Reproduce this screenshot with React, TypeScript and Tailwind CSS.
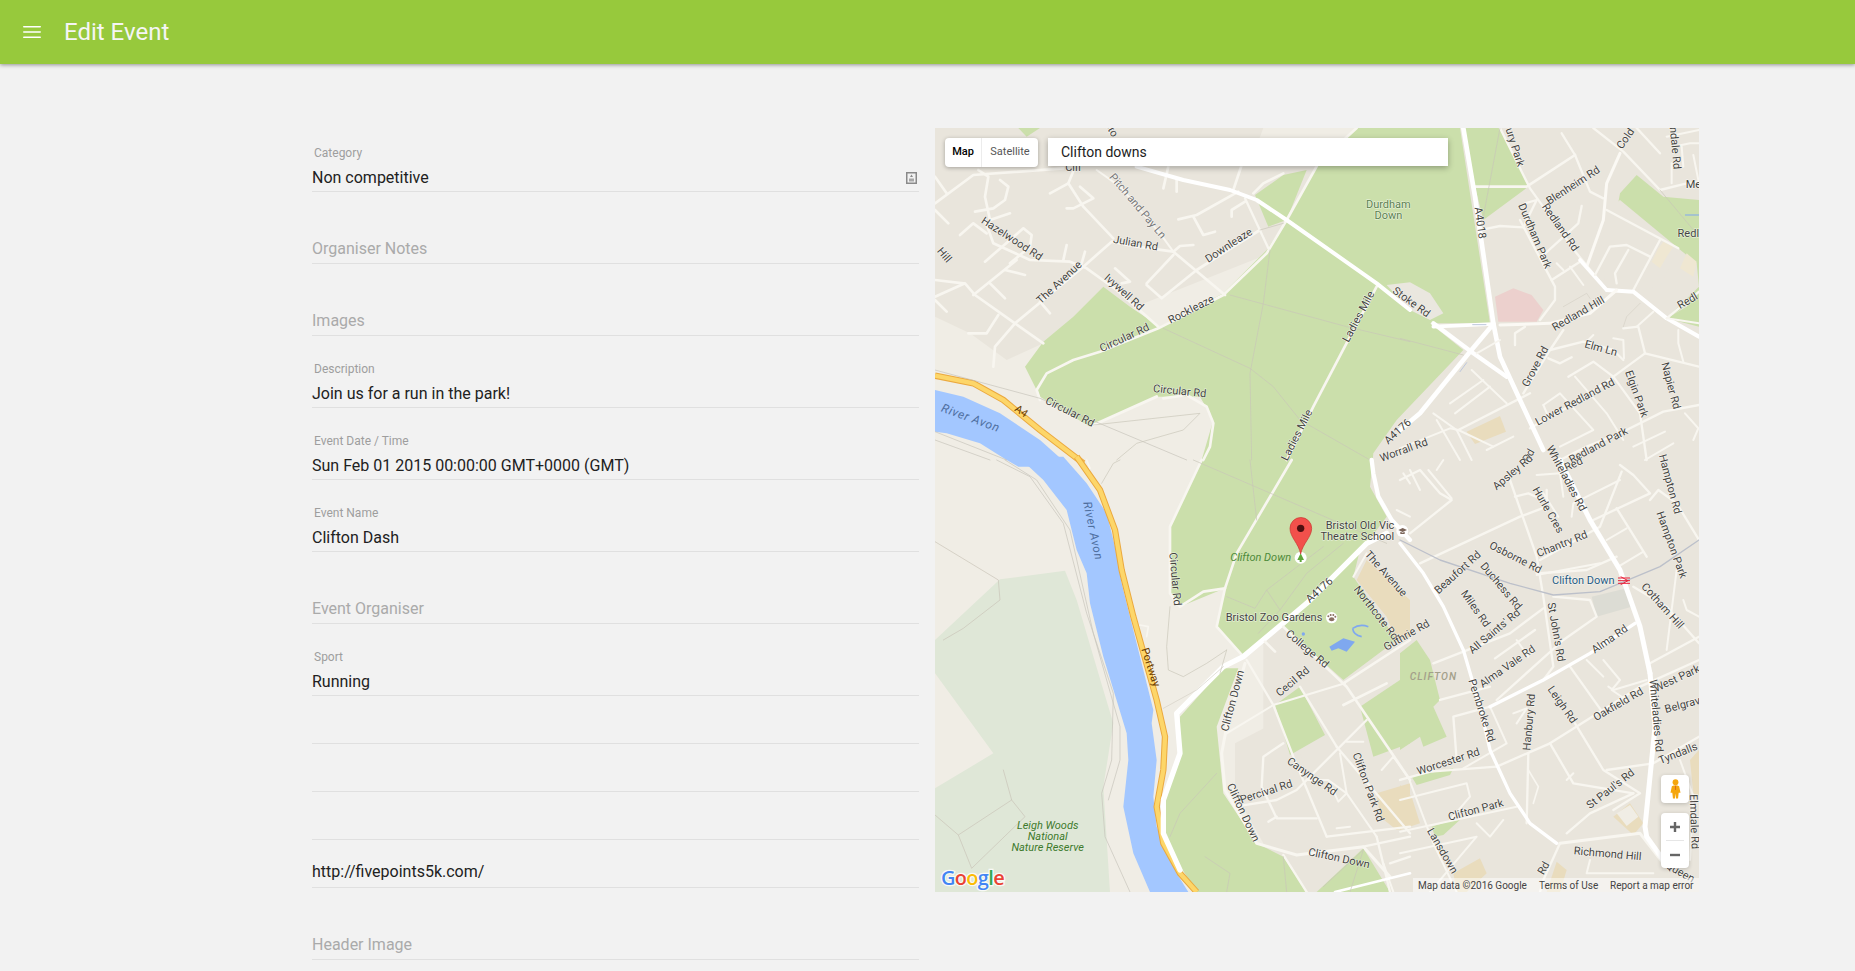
import { Menu } from "lucide-react";

type Field = { label?: string; value?: string; placeholder?: string; short?: boolean; icon?: boolean };

const fields: Field[] = [
  { label: "Category", value: "Non competitive", icon: true },
  { placeholder: "Organiser Notes" },
  { placeholder: "Images" },
  { label: "Description", value: "Join us for a run in the park!" },
  { label: "Event Date / Time", value: "Sun Feb 01 2015 00:00:00 GMT+0000 (GMT)" },
  { label: "Event Name", value: "Clifton Dash" },
  { placeholder: "Event Organiser" },
  { label: "Sport", value: "Running" },
  { short: true },
  { short: true },
  { short: true },
  { value: "http://fivepoints5k.com/", short: true },
  { placeholder: "Header Image" },
];

// every shape below is traced in the coordinates of a 3x crop of the map
const LAND = "#e9e5dc";
const PALE = "#f0ede5";
const PARK = "#cbdfab";
const WOOD = "#dfe7d7";
const WATER = "#a3c7ff";
const ROAD = "#f8f6f0";
const TRAIL = "#c9c5b8";

type Line = [string, number?, string?];
type Label = [number, number, number, string, string?];

const nw: Line[] = [
  ["15,250 130,165 400,145", 8],
  ["145,150 175,170 165,230 180,300", 8],
  ["210,180 235,200 225,240 190,265 135,275", 8],
  ["180,300 240,280", 8],
  ["15,170 50,220", 8],
  ["15,270 55,310", 8],
  ["90,345 130,310 170,340", 8],
  ["165,300 190,370 300,420 420,425 470,445 560,510 685,620", 8],
  ["165,425 280,325 305,345 300,380 240,430", 8],
  ["15,480 100,490", 8],
  ["15,530 105,490 135,525 255,610 340,670", 8],
  ["130,525 260,420", 8],
  ["180,490 225,535", 8],
  ["225,450 285,465", 8],
  ["15,540 50,575", 8],
  ["190,740 195,680 255,610 460,440 545,365 620,380 730,395 885,525", 8],
  ["115,640 170,640 205,585", 8],
  ["415,190 460,260 550,355", 8],
  ["360,220 415,190 440,130", 8],
  ["450,200 490,235 430,265 410,265", 8],
  ["410,375 400,420", 8],
  ["465,395 455,430", 8],
  ["555,445 600,485 575,490", 8],
  ["330,545 360,580", 8],
  ["650,490 730,405", 8],
  ["650,495 695,535 800,450 990,330", 8],
  ["730,395 750,378 790,375", 8],
  ["745,298 800,285 925,215", 8],
  ["790,290 820,345 855,335", 8],
  ["905,290 905,270 945,245", 8],
  ["945,235 1015,385", 7],
  ["910,210 940,120", 8],
  ["700,205 715,140", 8],
  ["740,215 740,180", 8],
  ["500,150 570,200 690,340 730,395", 6],
  ["970,220 1000,190 1060,160", 8],
  ["330,840 320,810 350,760 430,720 510,695 685,625 880,525 1010,400 1070,300 1165,130 1280,24", 8],
  ["490,915 680,830", 9],
  ["700,835 770,825 830,860 850,910 840,980 820,1020", 8],
  ["1340,500 1260,650 1150,860 1070,1020", 8],
  ["620,140 760,180 900,210 980,240 1070,300 1340,490 1440,570", 12, "#ffffff"],
  ["900,525 1250,620 1440,665", 2, TRAIL],
  ["1020,390 1000,550 960,760 965,1020", 2, TRAIL],
  ["700,625 960,745 1030,800 1110,900 1320,1020", 2, TRAIL],
  ["1060,310 990,330", 2, TRAIL],
  ["15,750 330,835 770,1020", 2, "#c6c3ba"],
  ["15,935 230,1020", 2, "#c6c3ba"],
  ["15,960 180,1020", 2, "#c6c3ba"],
  ["490,915 810,880 760,930 620,970 560,1020", 2, TRAIL],
];

const nwLabels: Label[] = [
  [615, 265, 50, "Pitch and Pay Ln", "#777"],
  [240, 365, 33, "Hazelwood Rd"],
  [615, 380, 10, "Julian Rd"],
  [902, 385, -33, "Downleaze"],
  [395, 495, -43, "The Avenue"],
  [575, 525, 42, "Ivywell Rd"],
  [788, 578, -27, "Rockleaze"],
  [588, 663, -25, "Circular Rd"],
  [415, 885, 27, "Circular Rd"],
  [748, 824, 6, "Circular Rd"],
  [1295, 595, -62, "Ladies Mile"],
  [1110, 950, -63, "Ladies Mile"],
  [1375, 265, 0, "Durdham", "#5b7f4e"],
  [1375, 298, 0, "Down", "#5b7f4e"],
  [35, 412, 50, "Hill"],
  [1438, 555, 36, "Stoke Rd"],
  [430, 153, 0, "Clif"],
  [535, 32, 62, "Sto"],
  [1410, 942, -42, "A4176"],
];

const ne: Line[] = [
  ["225,200 380,200 525,105", 8],
  ["300,24 390,205 530,400 620,510", 7],
  ["485,40 525,105 570,215 610,235", 7],
  ["580,24 670,95 780,210 860,190 897,185", 7],
  ["710,24 780,100", 7],
  ["800,50 897,30", 6],
  ["820,80 870,70 897,70", 6],
  ["845,80 850,140", 6],
  ["815,130 815,190", 6],
  ["880,105 895,180", 6],
  ["660,100 620,190 610,300 560,440", 9, "#fbf9f4"],
  ["620,270 835,385", 7],
  ["250,328 300,318 370,322 410,240 375,250", 7],
  ["425,410 535,310 545,258", 7],
  ["360,300 465,500 465,540 420,600", 7],
  ["455,480 540,425", 7],
  ["470,430 490,450", 6],
  ["510,440 550,495", 6],
  ["540,420 620,510", 11, "#ffffff"],
  ["585,465 630,380 680,375 750,410", 7],
  ["650,490 645,460 685,390", 7],
  ["700,510 780,360", 7],
  ["620,510 700,515 800,595 897,650", 12, "#ffffff"],
  ["800,595 897,515", 7],
  ["800,595 897,610", 6],
  ["300,615 450,610 570,580 650,510", 9, "#fbf9f4"],
  ["345,675 345,640 375,620", 7],
  ["490,630 450,690 370,820", 7],
  ["450,690 550,665 640,690 670,720", 7],
  ["445,715 480,730 515,712", 7],
  ["670,625 715,620 735,700 897,740", 7],
  ["710,620 760,575", 6],
  ["835,630 835,670 850,725", 6],
  ["640,655 670,660 672,715", 6],
  ["580,645 560,665", 6],
  ["735,700 640,770 550,835 390,925", 7],
  ["505,770 580,725 640,770 720,880 740,1020", 7],
  ["525,770 620,880 670,960", 6],
  ["430,855 480,820 580,930 480,980", 6],
  ["445,890 430,855", 6],
  ["175,930 390,820", 7],
  ["897,855 790,875 660,940 560,980 480,1020", 7],
  ["700,980 795,935", 6],
  ["735,1020 820,970", 6],
  ["855,880 895,925 880,960", 6],
  ["190,24 225,230 280,610 300,710 360,840 430,990", 14, "#ffffff"],
  ["100,610 220,700 320,770", 13, "#ffffff"],
  ["100,620 280,612", 11, "#ffffff"],
  ["280,612 210,695 60,880 0,930", 14, "#ffffff"],
  ["230,700 300,660", 6],
  ["215,750 320,850", 6],
  ["150,850 250,780", 6],
  ["165,880 270,800", 6],
  ["100,880 170,930 215,1020", 6],
  ["110,900 180,1020", 6],
  ["0,985 150,925 175,930 280,980", 6],
  ["260,990 340,950", 6],
  ["300,24 250,290", 2, TRAIL],
  ["0,655 190,705", 2, TRAIL],
  ["780,210 897,350", 2, TRAIL],
  ["670,620 680,590 720,550", 2, "#d4d0c5"],
  ["490,560 560,520 570,535", 2, "#d4d0c5"],
  ["218,614 258,614", 3, "#bcc6dc"],
  ["180,755 200,728", 3, "#bcc6dc"],
];

const neLabels: Label[] = [
  [230, 310, 82, "A4018"],
  [335, 85, 72, "ury Park"],
  [685, 62, -55, "Cold"],
  [815, 85, 85, "ndale Rd"],
  [525, 205, -33, "Blenheim Rd"],
  [472, 328, 55, "Redland Rd"],
  [395, 352, 67, "Durdham Park"],
  [880, 205, 0, "Me"],
  [865, 350, 0, "Redl"],
  [540, 590, -30, "Redland Hill"],
  [868, 552, -30, "Redl"],
  [600, 695, 15, "Elm Ln"],
  [415, 745, -62, "Grove Rd"],
  [700, 825, 70, "Elgin Park"],
  [802, 800, 75, "Napier Rd"],
  [530, 855, -28, "Lower Redland Rd"],
  [15, 1000, -20, "Worrall Rd"],
  [600, 985, -28, "Redland Park"],
  [395, 1012, -60, "Rd"],
];

const sw: Line[] = [
  ["1085,0 920,280 885,385", 8],
  ["815,0 720,200 720,400 750,440 820,395 885,385 860,500 940,590", 8],
  ["1370,220 1310,250 1130,430 940,590 880,620 740,760 750,880 700,1020 700,1120 750,1230", 16, "#ffffff"],
  ["945,610 890,800 875,880 885,990 980,1150 1100,1185 1300,1160 1380,1250", 9],
  ["1060,500 1250,680 1440,960", 8],
  ["1005,545 1035,575", 8],
  ["1440,540 1240,670", 8],
  ["890,820 1030,735 1245,670", 6],
  ["950,600 1030,735 1090,890 1190,1130", 7],
  ["1110,680 1220,860", 7],
  ["1240,735 1370,670", 8],
  ["1220,860 1440,1120", 7],
  ["1310,780 1100,990 1040,1020 915,1040", 7],
  ["1060,850 1000,890 995,980 1040,1075 1160,1075", 7],
  ["1015,1085 1040,1070", 7],
  ["1195,960 1250,1000 1225,1025 1195,960 1130,960", 6],
  ["1190,1130 1440,1100", 7],
  ["1220,1105 1260,1100", 6],
  ["1250,845 1300,845", 6],
  ["1300,1160 1440,1130", 7],
  ["1340,1130 1380,1296", 7],
  ["1380,1210 1440,1190", 7],
  ["1360,1210 1390,1296", 6],
  ["1060,1185 1130,1296", 7],
  ["1215,1296 1380,1255 1440,1240", 8, "#ffffff"],
  ["1230,880 1250,1000 1340,1130", 6],
  ["1355,930 1390,890 1440,960", 6],
  ["1270,350 1310,280", 6],
  ["1325,0 1330,40 1345,110 1385,180 1440,240", 13, "#ffffff"],
  ["1400,150 1440,170", 6],
  ["1420,40 1440,70", 6],
  ["630,495 655,500 650,530", 5],
  ["470,0 480,25", 5],
  ["515,70 550,10 570,0", 2, TRAIL],
  ["700,745 800,690 880,620", 2, "#d4d0c5"],
  ["720,440 710,560 715,630 760,650 830,610 890,570", 2, TRAIL],
  ["890,570 870,640", 2, TRAIL],
  ["960,0 980,180", 2, TRAIL],
  ["790,0 1370,250", 2, TRAIL],
  ["890,410 975,445 1010,390 1050,450", 2, TRAIL],
  ["1010,390 1180,260", 2, TRAIL],
  ["1240,250 1130,340 1050,450 985,520", 2, TRAIL],
  ["860,940 750,1060 720,1130", 2, TRAIL],
  ["825,1190 900,1240 890,1296", 2, TRAIL],
  ["1060,1190 1070,1296", 2, TRAIL],
  ["1300,1170 1260,1296", 2, TRAIL],
  ["1300,1170 1180,1280", 2, TRAIL],
  ["15,245 205,360 210,420 100,505 40,540", 2, "#c8c2b6"],
  ["220,930 245,1020 85,1125 15,1065", 2, "#c8c2b6"],
  ["245,1020 285,1070 125,1225 85,1125", 2, "#c8c2b6"],
  ["200,0 300,50 400,190 470,460 550,700 545,900 515,1000 525,1130 600,1296", 2, "#c6c3ba"],
  ["225,0 320,60 420,210 490,520 570,800 570,900 535,1020", 2, "#c6c3ba"],
];

const swLabels: Label[] = [
  [725, 358, 85, "Circular Rd"],
  [1290, 208, 0, "Bristol Old Vic"],
  [1282, 241, 0, "Theatre School"],
  [1360, 348, 48, "The Avenue"],
  [1330, 465, 52, "Northcote Rd"],
  [1125, 575, 40, "College Rd"],
  [1095, 673, -40, "Cecil Rd"],
  [1032, 484, 0, "Bristol Zoo Gardens"],
  [918, 725, -75, "Clifton Down"],
  [930, 1062, 65, "Clifton Down"],
  [1225, 1205, 12, "Clifton Down"],
  [1012, 1005, -18, "Percival Rd"],
  [1140, 958, 35, "Canynge Rd"],
  [1305, 985, 70, "Clifton Park Rd"],
  [1175, 398, -42, "A4176"],
];

const se: Line[] = [
  ["0,60 60,30 120,100 155,120 30,220", 7],
  ["30,30 60,90", 6],
  ["85,30 155,115", 6],
  ["130,0 110,30", 6],
  ["60,310 360,170 440,140 440,90", 7],
  ["330,60 410,290 430,410 460,620 430,660", 7],
  ["345,110 385,100 430,120", 7],
  ["410,45 480,40 490,110", 6],
  ["430,100 475,170", 6],
  ["420,300 600,200 665,35", 7],
  ["410,340 560,330 650,290", 7],
  ["410,345 600,310", 6],
  ["515,170 520,130 660,60", 6],
  ["580,180 750,100 700,45 660,15", 7],
  ["650,145 740,290", 7],
  ["620,240 680,205", 6],
  ["655,320 730,275", 6],
  ["750,120 775,90 830,130 897,240", 7],
  ["700,380 800,440 897,550", 7],
  ["850,420 860,450 897,470", 6],
  ["800,570 830,330", 6],
  ["750,610 897,530", 7],
  ["460,410 570,420 590,470 490,540 290,720", 7],
  ["285,595 405,510", 7],
  ["350,540 385,590", 6],
  ["100,610 330,520 430,445", 7],
  ["120,720 270,680", 7],
  ["270,740 160,770 170,900", 7],
  ["270,740 320,850 190,925", 6],
  ["340,760 380,745 350,790", 6],
  ["290,920 450,850 720,680 897,600", 7],
  ["0,960 90,935 290,920", 7],
  ["510,620 610,760", 7],
  ["560,600 610,650", 6],
  ["610,600 660,660 635,690 680,720", 6],
  ["740,660 640,690 625,680", 6],
  ["450,850 520,970 700,1000", 7],
  ["520,940 500,960", 6],
  ["525,790 610,930 720,1000 640,1050", 7],
  ["385,880 380,1090", 7],
  ["385,930 415,980 400,1030", 5],
  ["620,930 760,910 897,830", 7],
  ["0,1020 200,970 210,1010 150,1080", 6],
  ["0,1115 350,1040", 6],
  ["30,965 100,1150 170,1296", 6],
  ["230,1090 270,1130 310,1080", 6],
  ["0,1180 230,1130 90,1296", 6],
  ["480,1150 720,1120 790,1210", 9],
  ["500,1120 570,1060 700,1000", 7],
  ["480,1150 430,1260 420,1296", 7],
  ["570,1200 560,1240 760,1240", 6],
  ["840,900 880,1010 870,1200", 6],
  ["0,250 70,340 130,440 190,570 240,740 270,870 330,1000 390,1090 470,1150", 10, "#ffffff"],
  ["270,740 430,660 570,580 705,490", 10, "#ffffff"],
  ["480,0 570,180 660,330 720,500 750,640", 15, "#ffffff"],
  ["750,640 765,800 755,900 735,1100 740,1130 790,1200", 15, "#ffffff"],
  ["0,240 120,300 330,370 460,405 600,395 780,320 897,240", 4, "#bcc0ca"],
];

const seLabels: Label[] = [
  [345, 45, -40, "Apsley Rd"],
  [525, 22, -25, "Red"],
  [490, 60, 62, "Whiteladies Rd"],
  [800, 75, 75, "Hampton Rd"],
  [805, 258, 70, "Hampton Park"],
  [435, 155, 60, "Hurle Cres"],
  [490, 262, -22, "Chantry Rd"],
  [342, 302, 27, "Osborne Rd"],
  [180, 345, -42, "Beaufort Rd"],
  [295, 385, 50, "Duchess Rd"],
  [218, 452, 55, "Miles Rd"],
  [290, 522, -40, "All Saints' Rd"],
  [458, 518, 80, "St John's Rd"],
  [328, 628, -35, "Alma Vale Rd"],
  [635, 546, -35, "Alma Rd"],
  [780, 445, 48, "Cotham Hill"],
  [25, 535, -30, "Guthrie Rd"],
  [235, 755, 72, "Pembroke Rd"],
  [758, 768, 85, "Whiteladies Rd"],
  [835, 665, -25, "West Park"],
  [660, 742, -30, "Oakfield Rd"],
  [850, 745, -15, "Belgrav"],
  [478, 740, 55, "Leigh Rd"],
  [398, 787, -85, "Hanbury Rd"],
  [148, 915, -18, "Worcester Rd"],
  [838, 890, -22, "Tyndalls"],
  [638, 995, -38, "St Paul's Rd"],
  [230, 1060, -15, "Clifton Park"],
  [118, 1178, 60, "Lansdown"],
  [622, 1192, 5, "Richmond Hill"],
  [440, 1230, -60, "Rd"],
  [835, 1245, 30, "Queen"],
  [872, 1085, 88, "Elmdale Rd"],
];

const MapLines = ({ lines }: { lines: Line[] }) => (
  <>
    {lines.map(([pts, w = 7, color = ROAD], i) => (
      <polyline key={i} points={pts} fill="none" stroke={color} strokeWidth={w} strokeLinecap="round" strokeLinejoin="round" />
    ))}
  </>
);

const MapLabels = ({ labels }: { labels: Label[] }) => (
  <>
    {labels.map(([x, y, a, t, color = "#444440"], i) => (
      <text
        key={i}
        transform={`translate(${x} ${y}) rotate(${a})`}
        textAnchor="middle"
        fontSize={33}
        fill={color}
        stroke="#ffffff"
        strokeOpacity={0.7}
        strokeWidth={3}
        paintOrder="stroke"
      >
        {t}
      </text>
    ))}
  </>
);

const MapArt = () => (
  <svg viewBox="935 128 764 764" className="block h-full w-full" fontFamily="Roboto, sans-serif">
    <rect x="935" y="128" width="764" height="764" fill={LAND} />

    {/* pale ground by the river and round the edges of the estates */}
    <g transform="translate(930 120) scale(0.33333)">
      <polygon fill={PALE} points="15,590 120,640 230,720 340,670 1020,400 1170,1000 1180,1296 15,1296" />
      <polygon fill={PALE} points="640,140 1180,140 1280,24 1000,24 960,130" />
    </g>
    <g transform="translate(930 460) scale(0.33333)">
      <polygon fill={PALE} points="15,-100 1000,-100 1000,700 1000,1296 15,1296" />
      <polygon
        fill={WOOD}
        points="15,540 210,358 405,332 440,420 520,690 550,790 520,980 540,1296 15,1296 15,985 190,880 15,640"
      />
      <polygon fill={LAND} points="915,850 1030,790 1100,850 1180,1100 1000,1150 915,1000" />
    </g>

    {/* parks */}
    <g transform="translate(930 120) scale(0.33333)">
      <polygon
        fill={PARK}
        points="285,740 340,665 430,590 520,500 600,560 690,620 880,520 1010,390 1070,300 1160,140 1280,24 1590,24 1680,610 1500,610 1600,690 1400,900 1330,1000 1320,1100 1370,1190 1310,1270 1130,1450 940,1610 860,1520 885,1405 750,1460 720,1420 720,1220 815,1020 850,900 810,830 680,830 480,920 330,830"
      />
      <polygon fill={PARK} points="975,225 1060,165 1130,150 1070,300 1015,320" />
      <polygon fill={PARK} points="265,24 330,24 290,50" />
      <polygon fill="#eae7df" points="1370,495 1440,487 1500,520 1540,580 1500,600 1440,570" />
    </g>
    <g transform="translate(1400 120) scale(0.33333)">
      <polygon fill={PARK} points="190,24 300,24 385,200 250,300 225,200" />
      <polygon fill={PARK} points="660,220 710,165 790,230 897,240 897,520 840,570 800,595 860,560 897,500 897,620 800,595 897,500 890,430 835,385 680,290 650,275" />
      <polygon fill={LAND} points="660,240 835,385 780,500 700,510 620,510 600,400 620,270" />
      <polygon fill="#ecd0cd" points="285,530 340,505 395,525 430,570 410,605 295,605" />
      <polygon fill="#e9dcbd" points="200,935 300,888 318,935 225,972" />
      <polygon fill="#efe7d2" points="775,385 790,365 820,380 800,410 780,445 755,425" />
      <polygon fill="#efe7d2" points="860,400 890,425 880,470 840,445" />
      <polyline points="855,285 897,285" fill="none" stroke="#7fa8ef" strokeWidth="3" />
    </g>
    <g transform="translate(930 460) scale(0.33333)">
      <polygon fill={PARK} points="1060,500 1290,270 1270,350 1400,540 1240,660" />
      <polygon fill="#e9dcbd" points="1310,300 1440,420 1440,530 1400,545 1370,470 1280,360" />
      <polygon fill={PARK} points="1290,740 1440,640 1440,850 1330,890" />
      <polygon fill={PARK} points="1035,735 1110,680 1185,825 1080,885" />
      <polygon
        fill={PARK}
        points="750,770 880,625 925,625 860,800 880,1000 980,1150 1060,1190 1130,1296 800,1296 745,1210 700,1120 700,1020 745,880"
      />
      <polygon fill={PARK} points="1160,1296 1300,1165 1380,1296" />
      <polygon fill="#e9dcbd" points="1340,1000 1440,970 1440,1100 1400,1110 1350,1070" />
    </g>
    <g transform="translate(1400 460) scale(0.33333)">
      <polygon fill={PARK} points="50,540 90,600 120,720 100,740 140,830 70,860 60,830 0,870 0,580" />
      <polygon fill={PARK} points="35,950 160,925 150,945 50,975" />
      <polygon fill={PARK} points="95,1100 190,1070 130,1125 105,1130" />
      <polygon fill="#e9dcbd" points="0,975 35,1010 60,1090 0,1110" />
      <polygon fill="#e9dcbd" points="160,1240 240,1195 260,1240 200,1296 170,1296" />
      <polygon fill="#e9dcbd" points="440,1296 470,1205 500,1230 480,1296" />
      <polygon fill="#e9dcbd" points="870,900 897,870 897,1010 880,1000" />
      <polygon fill="#e9dcbd" points="640,1070 690,1030 730,1090 700,1125" />
      <polygon fill={PALE} points="650,1060 690,1035 715,1070 680,1098" />
      <polygon fill="#dcdcd4" points="575,410 680,385 695,440 590,470" />
    </g>

    {/* river and the yellow A4 */}
    <g transform="translate(930 120) scale(0.33333)">
      <polygon fill={WATER} points="15,810 100,830 210,880 330,960 420,1040 265,1040 230,1020 150,970 50,940 15,935" />
    </g>
    <g transform="translate(930 460) scale(0.33333)">
      <polygon
        fill={WATER}
        points="265,-10 340,60 410,150 440,270 470,340 480,430 520,590 590,820 595,900 580,1040 610,1180 660,1296 775,1296 740,1240 680,1100 670,1010 680,900 665,790 670,750 600,470 575,370 560,280 530,160 470,70 400,-10"
      />
    </g>
    <g transform="translate(930 120) scale(0.33333)">
      <polyline points="15,767 130,790 220,840 330,930 460,1030" fill="none" stroke="#eba93f" strokeWidth="19" />
      <polyline points="15,767 130,790 220,840 330,930 460,1030" fill="none" stroke="#fdd669" strokeWidth="13" />
    </g>
    <g transform="translate(930 460) scale(0.33333)">
      <polyline
        points="440,-10 510,90 555,210 575,330 610,470 680,720 705,830 700,930 680,1040 700,1150 750,1240 800,1296"
        fill="none"
        stroke="#eba93f"
        strokeWidth="19"
      />
      <polyline
        points="440,-10 510,90 555,210 575,330 610,470 680,720 705,830 700,930 680,1040 700,1150 750,1240 800,1296"
        fill="none"
        stroke="#fdd669"
        strokeWidth="13"
      />
    </g>

    {/* roads */}
    <g transform="translate(930 120) scale(0.33333)"><MapLines lines={nw} /></g>
    <g transform="translate(1400 120) scale(0.33333)"><MapLines lines={ne} /></g>
    <g transform="translate(930 460) scale(0.33333)"><MapLines lines={sw} /></g>
    <g transform="translate(1400 460) scale(0.33333)"><MapLines lines={se} /></g>

    {/* labels */}
    <g transform="translate(930 120) scale(0.33333)">
      <MapLabels labels={nwLabels} />
      <text transform="translate(118 905) rotate(20)" textAnchor="middle" fontSize="36" fontStyle="italic" letterSpacing="2" fill="#4f6f9f">River Avon</text>
      <text transform="translate(268 882) rotate(35)" textAnchor="middle" fontSize="32" fill="#6b3d00">A4</text>
    </g>
    <g transform="translate(1400 120) scale(0.33333)"><MapLabels labels={neLabels} /></g>
    <g transform="translate(930 460) scale(0.33333)">
      <MapLabels labels={swLabels} />
      <text transform="translate(478 215) rotate(78)" textAnchor="middle" fontSize="35" fontStyle="italic" letterSpacing="2" fill="#4f6f9f">River Avon</text>
      <text transform="translate(652 625) rotate(72)" textAnchor="middle" fontSize="33" fill="#6b3d00">Portway</text>
      <text x="992" y="302" textAnchor="middle" fontSize="33" fontStyle="italic" fill="#4e8a3a">Clifton Down</text>
      <text x="353" y="1108" textAnchor="middle" fontSize="33" fontStyle="italic" fill="#3d7a2c">Leigh Woods</text>
      <text x="353" y="1141" textAnchor="middle" fontSize="33" fontStyle="italic" fill="#3d7a2c">National</text>
      <text x="353" y="1174" textAnchor="middle" fontSize="33" fontStyle="italic" fill="#3d7a2c">Nature Reserve</text>

      {/* pond at the zoo */}
      <path d="M1198 560 L1240 535 L1275 545 L1250 575 L1225 565 L1205 572 Z" fill="#7fa8ef" />
      <path d="M1268 505 Q1290 490 1315 500 M1268 505 Q1270 525 1295 530" fill="none" stroke="#7fa8ef" strokeWidth="5" />
      <circle cx="1120" cy="522" r="5" fill="#7fa8ef" />

      {/* zoo paw */}
      <circle cx="1205" cy="473" r="17" fill="#fff" />
      <ellipse cx="1205" cy="478" rx="8" ry="6" fill="#8b6f62" />
      <circle cx="1195" cy="469" r="3" fill="#8b6f62" />
      <circle cx="1202" cy="465" r="3" fill="#8b6f62" />
      <circle cx="1210" cy="465" r="3" fill="#8b6f62" />
      <circle cx="1216" cy="470" r="3" fill="#8b6f62" />

      {/* school cap */}
      <circle cx="1417" cy="213" r="18" fill="#fff" />
      <path d="M1405 210 L1418 204 L1431 210 L1418 216 Z" fill="#7a6458" />
      <path d="M1411 215 L1411 222 L1424 222 L1424 215 L1418 218 Z" fill="#7a6458" />

      {/* marker */}
      <circle cx="1112" cy="293" r="18" fill="#fff" />
      <path d="M1112 280 L1102 300 L1109 300 L1109 306 L1115 306 L1115 300 L1122 300 Z" fill="#5fa83a" />
      <path
        d="M1112 282 C1106 250 1080 232 1080 205 A32.5 32.5 0 0 1 1145 205 C1145 232 1118 250 1112 282 Z"
        fill="#f2504b"
        stroke="#c9302c"
        strokeWidth="2"
      />
      <circle cx="1112" cy="205" r="11" fill="#4d0f10" />
    </g>
    <g transform="translate(1400 460) scale(0.33333)">
      <MapLabels labels={seLabels} />
      <text x="550" y="373" textAnchor="middle" fontSize="33" fill="#1f5a80" stroke="#ffffff" strokeOpacity={0.7} strokeWidth={3} paintOrder="stroke">Clifton Down</text>
      <text x="100" y="659" textAnchor="middle" fontSize="31" fontStyle="italic" fontWeight="500" letterSpacing="3" fill="#a3a08a">CLIFTON</text>
      <path d="M654 354 H690 M654 362 H690 M654 370 H690 M662 350 L684 362 L662 374" fill="none" stroke="#e8213a" strokeWidth="3" />
    </g>

    {/* logo */}
    <text x="941" y="885" fontSize="20" fontWeight="600" stroke="#ffffff" strokeWidth="2.5" strokeOpacity={0.8} paintOrder="stroke" fontFamily="'Open Sans', sans-serif" letterSpacing="-0.7">
      <tspan fill="#4285f4">G</tspan>
      <tspan fill="#ea4335">o</tspan>
      <tspan fill="#fbbc05">o</tspan>
      <tspan fill="#4285f4">g</tspan>
      <tspan fill="#34a853">l</tspan>
      <tspan fill="#ea4335">e</tspan>
    </text>
  </svg>
);

const GoogleMap = () => (
  <div className="relative mt-2 h-[764px] w-[764px] shrink-0 overflow-hidden bg-[#e9e5dc]">
    <MapArt />

    <div className="absolute left-[10px] top-[10px] flex h-[29px] rounded-sm bg-white text-[11px] shadow-[0_1px_4px_rgba(0,0,0,0.3)]">
      <div className="flex w-[37px] items-center justify-center border-r border-[#ececec] font-medium text-black">Map</div>
      <div className="flex w-[56px] items-center justify-center text-[#565656]">Satellite</div>
    </div>

    <div className="absolute left-[113px] top-[10px] flex h-[28px] w-[400px] items-center bg-white pl-[13px] text-sm text-[#212121] shadow-[0_2px_6px_rgba(0,0,0,0.3)]">
      Clifton downs
    </div>

    <div className="absolute left-[726px] top-[647px] flex h-[28px] w-[28px] items-center justify-center rounded-sm bg-white shadow-[0_1px_4px_rgba(0,0,0,0.2)]">
      <svg viewBox="0 0 12 22" className="h-[20px] w-[11px]">
        <circle cx="6" cy="3.5" r="3.2" fill="#f5a60d" />
        <path d="M2 8 Q6 6 10 8 L11.5 15 L9.5 15 L8.8 21.5 L6.6 21.5 L6 16 L5.4 21.5 L3.2 21.5 L2.5 15 L0.5 15 Z" fill="#f5a60d" />
        <path d="M6 7.5 V12" stroke="#d9661f" strokeWidth="1" />
      </svg>
    </div>

    <div className="absolute left-[726px] top-[685px] flex h-[55px] w-[28px] flex-col items-center rounded-sm bg-white shadow-[0_1px_4px_rgba(0,0,0,0.2)]">
      <div className="flex h-[27px] items-center justify-center">
        <svg viewBox="0 0 10 10" className="h-[10px] w-[10px]">
          <path d="M5 0 V10 M0 5 H10" stroke="#666" strokeWidth="2.4" />
        </svg>
      </div>
      <div className="h-px w-[18px] bg-[#e6e6e6]" />
      <div className="flex h-[27px] items-center justify-center">
        <svg viewBox="0 0 10 10" className="h-[10px] w-[10px]">
          <path d="M0 5 H10" stroke="#666" strokeWidth="2.4" />
        </svg>
      </div>
    </div>

    <div className="absolute bottom-0 right-0 flex h-[14px] w-[286px] items-center bg-white/50 pl-[5px] text-[10px] text-[#444]">
      <span className="w-[118px] whitespace-nowrap">Map data ©2016 Google</span>
      <span className="w-[72px] whitespace-nowrap pl-[3px]">Terms of Use</span>
      <span className="whitespace-nowrap pl-[2px]">Report a map error</span>
    </div>
  </div>
);

const FormField = ({ field }: { field: Field }) => (
  <div className={`relative flex flex-col justify-end border-b border-[#e0e0e0] ${field.short ? "h-[48px]" : "h-[72px]"}`}>
    {field.label && <span className="mb-[6px] pl-[2px] text-xs leading-[14px] text-[#9e9e9e]">{field.label}</span>}
    {field.value && (
      <span className={`text-base leading-[24px] text-[#212121] ${field.short ? "pb-[3px]" : "pb-[1px]"}`}>{field.value}</span>
    )}
    {field.placeholder && <span className="pb-[2px] text-base leading-[24px] text-[#aaaaaa]">{field.placeholder}</span>}
    {field.icon && (
      <svg viewBox="0 0 11 12" className="absolute bottom-[7px] right-[2px] h-[12px] w-[11px]">
        <rect x="0.75" y="0.75" width="9.5" height="10.5" fill="none" stroke="#8a8a8a" strokeWidth="1.5" />
        <path d="M5.5 2.5 L7 5 L4 5 Z" fill="#8a8a8a" />
        <rect x="3" y="6.5" width="5" height="3" fill="#a8a8a8" />
      </svg>
    )}
  </div>
);

export default function App() {
  return (
    <div className="h-screen overflow-hidden bg-[#f2f2f2] font-['Roboto',sans-serif]">
      <header className="relative z-10 flex h-[64px] items-center gap-[23px] bg-[#97c93c] pl-[23px] shadow-[0_1px_4px_rgba(0,0,0,0.4)]">
        <Menu className="h-[18px] w-[18px] scale-x-[1.34] text-white" strokeWidth={2} absoluteStrokeWidth />
        <h1 className="text-2xl font-normal text-[#f5f5f5]">Edit Event</h1>
      </header>

      <main className="flex gap-4 pl-[312px] pt-[56px]">
        <form className="w-[607px] shrink-0">
          {fields.map((f, i) => (
            <FormField key={i} field={f} />
          ))}
        </form>
        <GoogleMap />
      </main>
    </div>
  );
}
